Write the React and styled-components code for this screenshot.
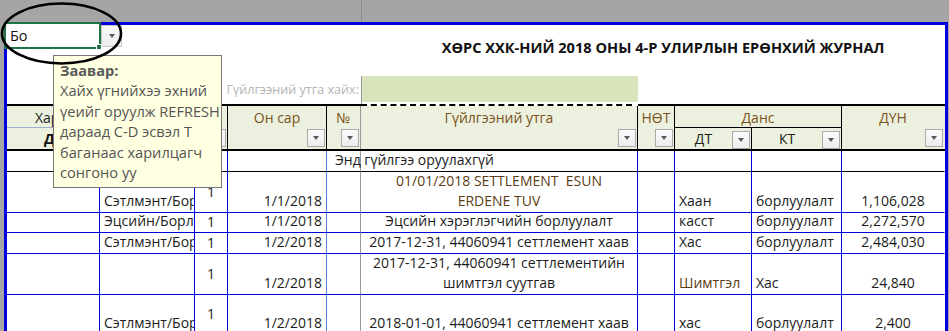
import React from 'react';
import styled, { createGlobalStyle } from 'styled-components';

const BLUE = '#0000dc';
const LIGHT_BLUE = '#4f81d8';
const FREEZE = '#9a9a9a';
const BROWN = '#7b5121';
const COLS = '93px 95px 33px 99px 34px 277px 37px 77px 90px 103px';

const GlobalStyle = createGlobalStyle`
  html, body { margin: 0; padding: 0; }
  body {
    width: 949px;
    height: 331px;
    overflow: hidden;
    background: #a5a5a5;
    font-family: "Open Sans", "Noto Sans", sans-serif;
  }
`;

const Window = styled.div`
  position: relative;
  width: 949px;
  height: 331px;
  overflow: hidden;
  background: #a5a5a5;
`;

const TopStrip = styled.div`
  height: 22px;
  display: flex;
`;

const StripGap = styled.div`
  width: 361px;
  flex: none;
`;

const FreezeStub = styled.div`
  width: 1px;
  background: #8c8c8c;
`;

const Sheet = styled.div`
  margin-left: 4px;
  width: 944px;
  height: 330px;
  box-sizing: border-box;
  background: #fff;
  border: 3px solid ${BLUE};
  border-bottom: none;
`;

/* ---------- top area (filter cell, title, search) ---------- */

const TopArea = styled.div`
  display: grid;
  grid-template-columns: ${COLS};
  grid-template-rows: 24px 27px 26px 2px;
`;

const NameBox = styled.div`
  grid-column: 1 / 3;
  grid-row: 1;
  display: flex;
  align-items: flex-start;
  margin: -3px 0 0 -3px;
  position: relative;
  z-index: 1;
`;

const NameInput = styled.div`
  width: 97px;
  height: 27px;
  box-sizing: border-box;
  border: 2px solid #217346;
  background: #fff;
  display: flex;
  align-items: center;
  padding-left: 4px;
  font-size: 14.5px;
  color: #111;
  position: relative;

  &::after {
    content: '';
    position: absolute;
    right: -3px;
    bottom: -3px;
    width: 4px;
    height: 4px;
    background: #217346;
    border: 1px solid #fff;
  }
`;

const DropButton = styled.div`
  margin-top: 3px;
  width: 21px;
  height: 22px;
  box-sizing: border-box;
  border: 1px solid #c8c8c8;
  background: linear-gradient(#fafafa, #ececec);
  display: flex;
  align-items: center;
  justify-content: center;
`;

const Caret = styled.span`
  width: 0;
  height: 0;
  border-left: 3.5px solid transparent;
  border-right: 3.5px solid transparent;
  border-top: 4px solid #5a5a5a;
`;

const Title = styled.div`
  grid-column: 6 / 11;
  grid-row: 1 / 3;
  display: flex;
  align-items: center;
  justify-content: center;
  padding: 0 0 7px 20px;
  font-weight: 700;
  font-size: 14.6px;
  color: #111;
  white-space: nowrap;
`;

const SearchLabel = styled.div`
  grid-column: 4 / 6;
  grid-row: 3;
  display: flex;
  align-items: center;
  justify-content: flex-end;
  padding-right: 2px;
  font-size: 12.6px;
  color: #b5b5b5;
  white-space: nowrap;
`;

const SearchBand = styled.div`
  grid-column: 6;
  grid-row: 3;
  background: #d8e4bc;
  border-left: 1px solid ${FREEZE};
`;

const FreezeTail = styled.div`
  grid-column: 6;
  grid-row: ${p => p.$row};
  border-left: 1px solid ${FREEZE};
  align-self: stretch;
`;

/* ---------- header ---------- */

const HeaderRule = styled.div`
  display: flex;
  height: 2px;
`;

const RuleSegment = styled.div`
  width: ${p => p.$w || 'auto'};
  flex: ${p => (p.$w ? 'none' : '1')};
  border-top: 2px ${p => (p.$dash ? 'dashed' : 'solid')} ${p => (p.$gap ? 'transparent' : '#000')};
`;

const Header = styled.div`
  display: grid;
  grid-template-columns: ${COLS};
  grid-template-rows: 22px 21px;
  background: #ebf1de;
  border-bottom: 2px solid #000;
`;

const HCell = styled.div`
  grid-column: ${p => p.$col};
  grid-row: ${p => p.$row || '1 / 3'};
  display: flex;
  flex-direction: ${p => (p.$inline ? 'row' : 'column')};
  align-items: ${p => (p.$inline ? 'center' : 'stretch')};
  border-right: 1px solid ${p => p.$edge || '#000'};
  border-bottom: ${p => (p.$under ? `1px solid ${p.$under}` : 'none')};
  color: ${p => p.$color || BROWN};
  font-size: 14px;
  font-weight: ${p => (p.$bold ? 700 : 400)};
  min-width: 0;
  overflow: hidden;
`;

const HLabel = styled.div`
  height: ${p => (p.$inline ? 'auto' : '22px')};
  flex: ${p => (p.$inline ? '1' : 'none')};
  display: flex;
  align-items: center;
  justify-content: ${p => (p.$left ? 'flex-start' : 'center')};
  padding-left: ${p => p.$pad || 0}px;
  white-space: nowrap;
`;

const FilterBtn = styled.div`
  align-self: flex-end;
  margin: ${p => (p.$inline ? '0 1px 0 0' : '1px 1px 0 0')};
  width: 18px;
  height: 18px;
  flex: none;
  box-sizing: border-box;
  border: 1px solid #ababab;
  background: linear-gradient(#fbfbfb, #ececec);
  display: flex;
  align-items: center;
  justify-content: center;
`;

/* ---------- data rows ---------- */

const Body = styled.div`
  display: grid;
  grid-template-columns: ${COLS};
  grid-template-rows: 21px 41px 20px 21px 41px 40px;
`;

const Cell = styled.div`
  display: flex;
  flex-direction: column;
  justify-content: ${p => (p.$middle ? 'center' : 'flex-end')};
  align-items: ${p => p.$align};
  border-right: 1px solid ${p => p.$edge};
  border-bottom: 1px solid ${p => p.$bottom};
  padding: 0 4px 1px;
  font-size: 14px;
  line-height: 20px;
  color: ${p => p.$color || '#1c1c1c'};
  white-space: nowrap;
  overflow: ${p => (p.$clip ? 'hidden' : 'visible')};
  min-width: 0;
`;

const Line = styled.span`
  display: block;
`;

/* ---------- overlays ---------- */

const Tooltip = styled.div`
  position: absolute;
  left: 53px;
  top: 55px;
  width: 169px;
  height: 133px;
  box-sizing: border-box;
  background: #ffffe1;
  border: 1px solid #777;
  padding: 4px 0 0 6px;
  color: #555;
  font-size: 14.6px;
  line-height: 20.4px;
  white-space: nowrap;
  z-index: 3;
`;

const TipTitle = styled.div`
  font-weight: 700;
  color: #5a5a5a;
`;

const TipLine = styled.div``;

const Ellipse = styled.svg`
  position: absolute;
  left: 0;
  top: 1px;
  z-index: 4;
  pointer-events: none;
`;

const columns = [
  { align: 'flex-start', edge: BLUE },
  { align: 'flex-start', edge: BLUE, clip: true },
  { align: 'center', edge: BLUE, middle: true },
  { align: 'flex-end', edge: LIGHT_BLUE },
  { align: 'flex-start', edge: FREEZE },
  { align: 'center', edge: BLUE },
  { align: 'center', edge: BLUE },
  { align: 'flex-start', edge: BLUE },
  { align: 'flex-start', edge: BLUE },
  { align: 'center', edge: 'transparent' },
];

const rows = [
  { bottom: '#000', cells: ['', '', '', '', { text: 'Энд гүйлгээ оруулахгүй', pad: 4 }, '', '', '', '', ''] },
  {
    bottom: BLUE,
    cells: ['', 'Сэтлмэнт/Борлуулалт', '1', '1/1/2018', '',
      { lines: ['01/01/2018 SETTLEMENT\u00a0\u00a0ESUN', 'ERDENE TUV'], color: '#5c3c14' },
      '', 'Хаан', 'борлуулалт', '1,106,028'],
  },
  {
    bottom: BLUE,
    cells: ['', 'Эцсийн/Борлуулалт', '1', '1/1/2018', '', 'Эцсийн хэрэглэгчийн борлуулалт', '', 'касст', 'борлуулалт', '2,272,570'],
  },
  {
    bottom: BLUE,
    cells: ['', 'Сэтлмэнт/Борлуулалт', '1', '1/2/2018', '', '2017-12-31, 44060941 сеттлемент хаав', '', 'Хас', 'борлуулалт', '2,484,030'],
  },
  {
    bottom: BLUE,
    cells: ['', '', '1', '1/2/2018', '',
      { lines: ['2017-12-31, 44060941 сеттлементийн', 'шимтгэл суутгав'] },
      '', { text: 'Шимтгэл', color: '#5c3c14' }, 'Хас', '24,840'],
  },
  {
    bottom: BLUE,
    cells: ['', 'Сэтлмэнт/Борлуулалт', '1', '1/2/2018', '', '2018-01-01, 44060941 сеттлемент хаав', '', 'хас', 'борлуулалт', '2,400'],
  },
];

const tipLines = [
  'Хайх үгнийхээ эхний',
  'үеийг оруулж REFRESH',
  'дараад C-D эсвэл T',
  'баганаас харилцагч',
  'сонгоно уу',
];

function Filter({ inline }) {
  return (
    <FilterBtn $inline={inline}>
      <Caret />
    </FilterBtn>
  );
}

function DataCell({ value, col, bottom }) {
  const v = typeof value === 'string' ? { text: value } : value;
  return (
    <Cell
      $align={col.align}
      $edge={col.edge}
      $bottom={bottom}
      $clip={col.clip}
      $middle={col.middle}
      $color={v.color}
      style={v.pad ? { paddingLeft: 4 + v.pad } : undefined}
    >
      {v.lines ? v.lines.map((l, i) => <Line key={i}>{l}</Line>) : v.text}
    </Cell>
  );
}

export default function App() {
  return (
    <Window>
      <GlobalStyle />
      <TopStrip>
        <StripGap />
        <FreezeStub />
      </TopStrip>

      <Sheet>
        <TopArea>
          <NameBox>
            <NameInput>Бо</NameInput>
            <DropButton>
              <Caret />
            </DropButton>
          </NameBox>
          <Title>ХӨРС ХХК-НИЙ 2018 ОНЫ 4-Р УЛИРЛЫН ЕРӨНХИЙ ЖУРНАЛ</Title>
          <SearchLabel>Гүйлгээний утга хайх:</SearchLabel>
          <SearchBand />
          <FreezeTail $row={4} />
        </TopArea>

        <HeaderRule>
          <RuleSegment $w="354px" />
          <RuleSegment $w="271px" $dash />
          <RuleSegment $w="6px" $gap />
          <RuleSegment />
        </HeaderRule>

        <Header>
          <HCell $col="1 / 3" $row="1" $edge={BLUE} $under="#9fb0c8" $color="#222">
            <HLabel $left $pad={28}>Харилцагч</HLabel>
          </HCell>
          <HCell $col="1" $row="2" $edge={BLUE} $color="#111" $bold $inline>
            <HLabel $inline $left $pad={37}>Дансны нэр</HLabel>
          </HCell>
          <HCell $col="2" $row="2" $inline>
            <HLabel $inline />
            <Filter inline />
          </HCell>
          <HCell $col="3">
            <HLabel />
            <Filter />
          </HCell>
          <HCell $col="4">
            <HLabel>Он сар</HLabel>
            <Filter />
          </HCell>
          <HCell $col="5" $edge={FREEZE}>
            <HLabel>№</HLabel>
            <Filter />
          </HCell>
          <HCell $col="6">
            <HLabel>Гүйлгээний утга</HLabel>
            <Filter />
          </HCell>
          <HCell $col="7">
            <HLabel>НӨТ</HLabel>
            <Filter />
          </HCell>
          <HCell $col="8 / 10" $row="1" $under="#000">
            <HLabel>Данс</HLabel>
          </HCell>
          <HCell $col="8" $row="2" $inline $color="#222">
            <HLabel $inline>ДТ</HLabel>
            <Filter inline />
          </HCell>
          <HCell $col="9" $row="2" $inline $color="#222">
            <HLabel $inline>КТ</HLabel>
            <Filter inline />
          </HCell>
          <HCell $col="10" $edge="transparent">
            <HLabel>ДҮН</HLabel>
            <Filter />
          </HCell>
        </Header>

        <Body>
          {rows.map((row, r) =>
            row.cells.map((value, c) => (
              <DataCell key={`${r}-${c}`} value={value} col={columns[c]} bottom={row.bottom} />
            ))
          )}
        </Body>
      </Sheet>

      <Tooltip>
        <TipTitle>Заавар:</TipTitle>
        {tipLines.map(l => (
          <TipLine key={l}>{l}</TipLine>
        ))}
      </Tooltip>

      <Ellipse width="126" height="66" viewBox="0 0 126 66">
        <ellipse cx="61.5" cy="32.5" rx="59.5" ry="30" fill="none" stroke="#000" strokeWidth="2.6" />
      </Ellipse>
    </Window>
  );
}
